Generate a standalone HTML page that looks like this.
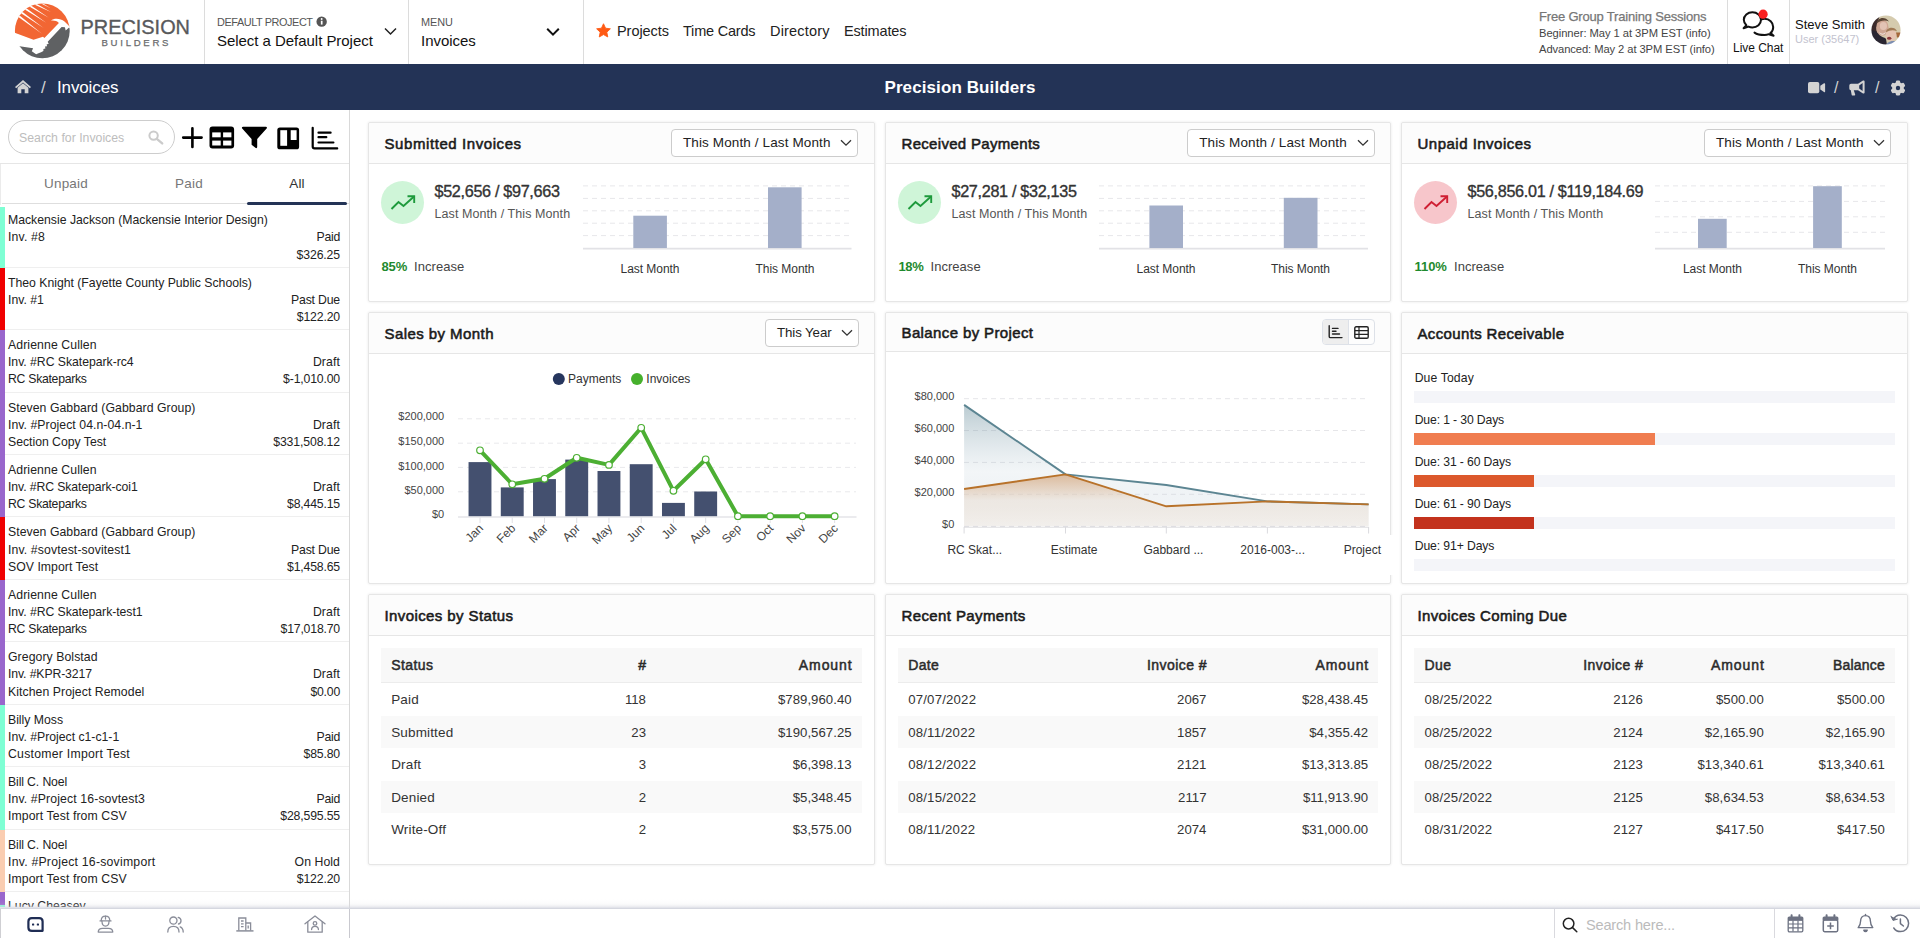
<!DOCTYPE html>
<html lang="en">
<head>
<meta charset="utf-8">
<title>Invoices - Precision Builders</title>
<style>
*{box-sizing:border-box;margin:0;padding:0}
html,body{width:1920px;height:938px;overflow:hidden;background:#fff}
body{font-family:"Liberation Sans",sans-serif;color:#222;font-size:13px;position:relative}
.abs{position:absolute}
svg{display:block;overflow:visible}
/* ---------- top header ---------- */
#top{position:absolute;left:0;top:0;width:1920px;height:64px;background:#fff}
.vdiv{position:absolute;top:0;width:1px;height:64px;background:#dcdcdc}
.lbl{position:absolute;font-size:10.9px;color:#555;letter-spacing:-.08px;white-space:nowrap;line-height:14px}
.val{position:absolute;font-size:15px;color:#111;letter-spacing:-.04px;white-space:nowrap;line-height:18px}
.nav{position:absolute;top:22px;font-size:14.5px;color:#222;letter-spacing:-.05px;white-space:nowrap;line-height:18px}
/* ---------- navy bar ---------- */
#bar{position:absolute;left:0;top:64px;width:1920px;height:46px;background:#233356;color:#fff}
/* ---------- sidebar ---------- */
#side{position:absolute;left:0;top:110px;width:350px;height:799px;border-right:1px solid #d9d9d9;background:#fff;overflow:hidden}
#side .clip{position:absolute;left:0;top:797px;width:349px;height:3px;background:#fff}
.tab{position:absolute;top:54px;height:40px;line-height:40px;text-align:center;font-size:13.5px;color:#777;letter-spacing:.2px}
.it{position:absolute;left:0;width:349px;height:62.43px;box-shadow:inset 0 -1px 0 #efefef;border-left:5px solid #9966cc;padding:7px 9px 3px 3px;font-size:12.25px;line-height:17.14px;color:#222;letter-spacing:0;white-space:nowrap}
.it div{display:flex;justify-content:space-between;height:17.14px}
.it.g{border-left-color:#7fffd4}
.it.r{border-left-color:#f00000}
.it.o{border-left-color:#facdb1}
/* ---------- footer ---------- */
#foot{position:absolute;left:0;top:909px;width:1920px;height:29px;background:#fff}
#fsh{position:absolute;left:0;top:899px;width:1920px;height:10px;background:linear-gradient(to bottom,rgba(213,215,224,0) 0%,rgba(213,215,224,.05) 30%,rgba(213,215,224,.1) 45%,rgba(213,215,224,.17) 55%,rgba(213,215,224,.29) 65%,rgba(213,215,224,.45) 75%,rgba(213,215,224,.69) 85%,rgba(213,215,224,1) 95%,rgba(213,215,224,1) 100%)}
/* ---------- cards ---------- */
.card{position:absolute;background:#fff;border:1px solid #e6e6e6;border-radius:2px;box-shadow:0 0 3px rgba(0,0,0,.09)}
.card .hd{position:absolute;left:0;top:0;width:100%;height:41px;background:#fcfcfc;border-bottom:1px solid #e6e6e6;border-radius:2px 2px 0 0}
.card .ttl{position:absolute;left:15.5px;top:11px;font-size:15px;font-weight:normal;-webkit-text-stroke:.55px #1a1a1a;color:#1a1a1a;white-space:nowrap;line-height:20px}
.sel{position:absolute;height:28px;border:1px solid #ccc;border-radius:4px;background:#fff;font-size:13.5px;color:#222;line-height:26px;padding-left:11px;letter-spacing:.15px;white-space:nowrap}
.sel svg{position:absolute;right:5px;top:9px}
.t{position:absolute;white-space:nowrap}
</style>
</head>
<body>

<!-- ================= TOP HEADER ================= -->
<div id="top">
  <!-- logo -->
  <svg class="abs" style="left:14px;top:3px" width="57" height="57" viewBox="0 0 57 57">
    <defs><clipPath id="lc"><circle cx="28.3" cy="27.9" r="27.4"/></clipPath></defs>
    <g clip-path="url(#lc)">
      <path d="M-3 28.300 L19.500 36.800 L29 33.700 L30.400 35 L44.900 19.900 C43 18 40 17.200 37 17.600 C40 14.900 46.500 15.200 50.500 18.600 C52.800 20.600 54.500 22.600 56.500 24.600 L60 24 L60 -5 L-5 -5 Z" fill="#f26633"/>
      <path d="M60 24.400 L54.800 24.800 L51.700 27.600 L50.900 24.300 L47.600 24.100 L33.700 38.650 L34.700 41 L32.700 41.300 L33 43.300 L31 43.600 L31.400 45.600 L29.400 45.900 L29.400 47.900 L27.100 49.200 L25.100 49.900 L22.100 51.200 L17.800 48.200 L19.100 45.300 L5.600 43.300 L-3 42.600 L-3 60 L60 60 Z" fill="#5f6163"/>
      <g fill="#fff">
        <path d="M4 13.800 L5.600 12.600 L27.600 30.600 Z"/>
        <path d="M6.300 9.800 L7.900 8.600 L29.600 25 Z"/>
        <path d="M10.400 6.200 L12 5 L32.200 19.700 Z"/>
        <path d="M14.800 3.300 L16.600 2.300 L34.800 14.700 Z"/>
        <path d="M20.200 1.400 L22 .6 L36.800 9.100 Z"/>
        <path d="M27 .6 L28.600 .2 L36.600 5.200 Z"/>
      </g>
    </g>
  </svg>
  <svg class="abs" style="left:80px;top:14px" width="112" height="36" viewBox="0 0 112 36">
    <text x="0.5" y="19.8" font-family="Liberation Sans, sans-serif" font-size="21" fill="#58595b" stroke="#58595b" stroke-width=".35" textLength="109.5" lengthAdjust="spacingAndGlyphs">PRECISION</text>
    <text x="21.5" y="31.8" font-family="Liberation Sans, sans-serif" font-size="9.6" fill="#6a6b6d" stroke="#6a6b6d" stroke-width=".25" textLength="67" lengthAdjust="spacing">BUILDERS</text>
  </svg>

  <div class="vdiv" style="left:204px"></div>
  <div class="lbl" style="left:217px;top:15px;letter-spacing:-.42px">DEFAULT PROJECT</div>
  <svg class="abs" style="left:315.5px;top:16.3px" width="11.300" height="11.300" viewBox="0 0 10 10"><circle cx="5" cy="5" r="4.6" fill="#555"/><rect x="4.3" y="4.2" width="1.5" height="3.4" fill="#fff"/><circle cx="5" cy="2.7" r=".85" fill="#fff"/></svg>
  <div class="val" style="left:217px;top:32px">Select a Default Project</div>
  <svg class="abs" style="left:384px;top:27px" width="13" height="9" viewBox="0 0 13 9"><path d="M1 1.5 L6.5 7 L12 1.5" fill="none" stroke="#222" stroke-width="1.5"/></svg>

  <div class="vdiv" style="left:408px"></div>
  <div class="lbl" style="left:421px;top:15px">MENU</div>
  <div class="val" style="left:421px;top:32px">Invoices</div>
  <svg class="abs" style="left:546px;top:27px" width="14" height="10" viewBox="0 0 14 10"><path d="M1.2 1.8 L7 7.6 L12.8 1.8" fill="none" stroke="#111" stroke-width="2"/></svg>

  <div class="vdiv" style="left:583px"></div>
  <svg class="abs" style="left:596px;top:23px" width="15" height="15" viewBox="0 0 24 24"><path d="M12 1.2 L15.3 8.3 L23 9.3 L17.3 14.6 L18.8 22.3 L12 18.5 L5.2 22.3 L6.7 14.6 L1 9.3 L8.7 8.3 Z" fill="#ff5a14" stroke="#ff5a14" stroke-width="1.4" stroke-linejoin="round"/></svg>
  <div class="nav" style="left:617px">Projects</div>
  <div class="nav" style="left:683px;letter-spacing:-.2px">Time Cards</div>
  <div class="nav" style="left:770px;letter-spacing:.19px">Directory</div>
  <div class="nav" style="left:844px;letter-spacing:-.15px">Estimates</div>

  <div class="t" style="left:1539px;top:9px;font-size:13px;color:#777;letter-spacing:-.19px;line-height:16px;-webkit-text-stroke:.25px #777">Free Group Training Sessions</div>
  <div class="t" style="left:1539px;top:26px;font-size:11.2px;color:#444;letter-spacing:-.05px;line-height:14px">Beginner: May 1 at 3PM EST (info)</div>
  <div class="t" style="left:1539px;top:42px;font-size:11.2px;color:#444;letter-spacing:-.08px;line-height:14px">Advanced: May 2 at 3PM EST (info)</div>

  <div class="vdiv" style="left:1727px"></div>
  <svg class="abs" style="left:1742px;top:9px" width="34" height="28" viewBox="0 0 34 28">
    <path d="M28.600 24 C30.300 22.500 31.200 20.300 31.200 17.900 C31.200 13.400 27.400 9.800 22.600 9.800 C21.500 9.800 20.500 10 19.600 10.300" fill="none" stroke="#111" stroke-width="2" stroke-linecap="round"/>
    <path d="M12.500 23.600 C14.600 25.100 17.800 26 22.600 26 C24.200 26 25.600 25.700 26.800 25.200 L31.600 26.700 L28.600 24" fill="none" stroke="#111" stroke-width="2" stroke-linecap="round" stroke-linejoin="round"/>
    <path d="M4.400 16.200 C2.800 14.800 1.800 12.900 1.800 10.800 C1.800 6.600 5.600 3.200 10.400 3.200 C15.200 3.200 19 6.600 19 10.800 C19 15 15.200 18.400 10.400 18.400 C9 18.400 7.700 18.100 6.500 17.600 L1.600 19.200 Z" fill="#fff" stroke="#111" stroke-width="2" stroke-linejoin="round"/>
    <circle cx="21.100" cy="5.200" r="4.600" fill="#fb1f1f"/>
  </svg>
  <div class="t" style="left:1733px;top:40px;font-size:12px;color:#111;letter-spacing:-.04px;line-height:16px">Live Chat</div>
  <div class="vdiv" style="left:1789px"></div>
  <div class="t" style="left:1795px;top:16.8px;font-size:13px;color:#111;letter-spacing:0;line-height:16px">Steve Smith</div>
  <div class="t" style="left:1795px;top:32px;font-size:11px;color:#c3c3cf;letter-spacing:0;line-height:14px">User (35647)</div>
  <!-- avatar -->
  <svg class="abs" style="left:1870.5px;top:14.5px" width="30" height="30" viewBox="0 0 30 30">
    <defs><clipPath id="av"><circle cx="15" cy="15" r="14.600"/></clipPath><filter id="avb" x="-10%" y="-10%" width="120%" height="120%"><feGaussianBlur stdDeviation=".75"/></filter></defs>
    <g clip-path="url(#av)"><g filter="url(#avb)">
      <rect x="-3" y="-3" width="36" height="36" fill="#d5cbae"/>
      <path d="M-3 -3 H10 L7 6 L5.500 14 L9 33 H-3 Z" fill="#3b2b2b"/>
      <path d="M25 17.500 H33 V22.500 H26 Z" fill="#a5673a"/>
      <ellipse cx="11.400" cy="12.600" rx="6.200" ry="8.200" fill="#cfa794"/>
      <ellipse cx="12.400" cy="11" rx="3.600" ry="4" fill="#e2c3b4"/>
      <path d="M5.500 8.500 C6 2.500 14 0.500 18 6.500 C14 4.800 9.500 5.300 5.500 8.500Z" fill="#5a4535"/>
      <path d="M-3 16 C3 13.500 6.500 17.500 9 20.500 C12 23 14 22 15 24 L16.500 33 L-3 33 Z" fill="#2b2530"/>
      <path d="M8 17 C10.500 19.200 13 19.200 15 16.800 C13.800 20.600 9.500 20.800 8 17Z" fill="#f0e4de"/>
      <ellipse cx="20" cy="20" rx="5.300" ry="6" fill="#e6c4b2"/>
      <path d="M15 17.300 C15.500 11.800 24 11 26 16.200 C22.500 14.500 18.500 15 15 17.300Z" fill="#a07a55"/>
      <path d="M13.500 33 C14.500 26.500 24 24 26 28 L27 33Z" fill="#7b8db0"/>
      <ellipse cx="18.200" cy="23.300" rx="2.200" ry="1.500" fill="#8b3a3a"/>
    </g></g>
  </svg>
</div>

<!-- ================= NAVY BAR ================= -->
<div id="bar">
  <svg class="abs" style="left:14px;top:15px" width="18" height="15" viewBox="0 0 18 15"><path d="M9 1 L1 8 L2.2 9.300 L9 3.400 L15.800 9.300 L17 8 Z" fill="#d3d3d3"/><path d="M3.600 8.800 L9 4.200 L14.400 8.800 L14.400 14.300 L10.700 14.300 L10.700 10.300 L7.300 10.300 L7.300 14.300 L3.600 14.300 Z" fill="#d3d3d3"/></svg>
  <div class="t" style="left:41px;top:14px;font-size:17px;color:#d3d3d3;line-height:20px">/</div>
  <div class="t" style="left:57px;top:14px;font-size:17px;color:#fff;letter-spacing:-.13px;line-height:20px">Invoices</div>
  <div class="t" style="left:760px;width:400px;text-align:center;top:14px;font-size:17px;font-weight:bold;color:#fff;letter-spacing:.1px;line-height:20px">Precision Builders</div>
  <!-- right icons -->
  <svg class="abs" style="left:1808px;top:18px" width="18" height="12" viewBox="0 0 18 12"><rect x="0" y="0" width="11.300" height="11.300" rx="1.800" fill="#d3d3d3"/><path d="M12.300 3.800 L16 1.300 Q17.100 .8 17.100 2 L17.100 9.400 Q17.100 10.600 16 10.100 L12.300 7.600 Z" fill="#d3d3d3"/></svg>
  <div class="t" style="left:1834px;top:14px;font-size:16px;color:#d3d3d3;line-height:20px">/</div>
  <svg class="abs" style="left:1849px;top:16px" width="17" height="16" viewBox="0 0 17 16"><path d="M14 0.600 Q15.600 0.200 15.600 1.600 L15.600 12.400 Q15.600 13.800 14 13.400 L9 10.200 L4.800 10.200 L6.200 14.600 Q6.400 15.600 5.400 15.600 L3.600 15.600 Q2.900 15.600 2.700 14.900 L1.800 10.200 Q0.300 10 0.300 8.500 L0.300 5.500 Q0.300 3.800 2 3.800 L9 3.800 Z M13.600 3 L10.200 5.400 L10.200 8.600 L13.600 11 Z" fill="#d3d3d3" fill-rule="evenodd"/></svg>
  <div class="t" style="left:1875px;top:14px;font-size:16px;color:#d3d3d3;line-height:20px">/</div>
  <svg class="abs" style="left:1890px;top:16px" width="16" height="16" viewBox="0 0 16 16"><g fill="#d3d3d3"><circle cx="8" cy="8" r="5.900"/><rect x="5.900" y="0.500" width="4.200" height="15" rx="1.300"/><rect x="5.900" y="0.500" width="4.200" height="15" rx="1.300" transform="rotate(60 8 8)"/><rect x="5.900" y="0.500" width="4.200" height="15" rx="1.300" transform="rotate(120 8 8)"/></g><circle cx="8" cy="8" r="2.200" fill="#233356"/></svg>
</div>

<!-- ================= SIDEBAR ================= -->
<div id="side">
  <div class="abs" style="left:8px;top:10px;width:167px;height:33.5px;border:1px solid #cdcdcd;border-radius:17px"></div>
  <div class="t" style="left:19px;top:19.8px;font-size:12.3px;color:#bdbdbd;letter-spacing:0;line-height:16px">Search for Invoices</div>
  <svg class="abs" style="left:147.5px;top:19.5px" width="16" height="15" viewBox="0 0 16 15"><circle cx="5.600" cy="5.600" r="4.200" fill="none" stroke="#cbcbcb" stroke-width="2"/><path d="M8.800 8.800 L14.200 13.400" stroke="#cbcbcb" stroke-width="2.400" stroke-linecap="round"/></svg>
  <svg class="abs" style="left:182px;top:17px" width="21" height="21" viewBox="0 0 21 21"><path d="M10.400 1.300 V19.900 M1.200 10.600 H19.600" stroke="#000" stroke-width="2.600" stroke-linecap="round"/></svg>
  <svg class="abs" style="left:209px;top:16px" width="26" height="23" viewBox="0 0 26 23"><rect x=".5" y=".6" width="24.600" height="21.900" rx="3" fill="#000"/><rect x="3.200" y="6.400" width="8.500" height="4.900" fill="#fff"/><rect x="14.100" y="6.400" width="8.300" height="4.900" fill="#fff"/><rect x="3.200" y="14.600" width="8.500" height="4.900" fill="#fff"/><rect x="14.100" y="14.600" width="8.300" height="4.900" fill="#fff"/></svg>
  <svg class="abs" style="left:241px;top:16px" width="27" height="23" viewBox="0 0 27 23"><path d="M2.200 .8 H24.800 Q26.600 1 25.600 2.600 L16.200 13 V21 Q16 22.800 14.400 21.800 L10.600 18.800 V13 L1.200 2.600 Q.2 1 2.200 .8Z" fill="#000"/></svg>
  <svg class="abs" style="left:277px;top:16.500px" width="23" height="23" viewBox="0 0 23 23"><rect x=".3" y=".5" width="21.800" height="21.800" rx="2.600" fill="#000"/><rect x="3.300" y="3.200" width="6.800" height="15.600" fill="#fff"/><rect x="13.700" y="3.200" width="5.900" height="9.800" fill="#fff"/></svg>
  <svg class="abs" style="left:311px;top:16.500px" width="28" height="23" viewBox="0 0 28 23"><path d="M1.700 .8 V19.600 Q1.700 21.400 3.500 21.400 H26.200" fill="none" stroke="#000" stroke-width="2.200" stroke-linecap="round"/><path d="M7.500 5.700 H19.600 M7.500 10.200 H15.300 M7.500 15.500 H22.400" stroke="#000" stroke-width="2.200" stroke-linecap="round"/></svg>
  <div class="abs" style="left:0;top:53px;width:349px;height:1px;background:#e6e6e6"></div>
  <div class="abs" style="left:2px;top:93px;width:347px;height:1px;background:#dedede"></div><div class="abs" style="left:0;top:54px;width:1px;height:41px;background:#ebebeb"></div>
  <div class="tab" style="left:8px;width:116px">Unpaid</div>
  <div class="tab" style="left:131px;width:116px">Paid</div>
  <div class="tab" style="left:247px;width:100px;color:#333">All</div>
  <div class="abs" style="left:247px;top:92px;width:100px;height:3px;background:#233356;border-radius:1.5px"></div>
  <div class="it g" style="top:95.25px"><div><span style="letter-spacing:-0.006px">Mackensie Jackson (Mackensie Interior Design)</span><span></span></div><div><span style="letter-spacing:0.175px">Inv. #8</span><span style="letter-spacing:-0.258px">Paid</span></div><div><span></span><span style="letter-spacing:-0.126px">$326.25</span></div></div>
  <div class="it r" style="top:157.68px"><div><span style="letter-spacing:-0.013px">Theo Knight (Fayette County Public Schools)</span><span></span></div><div><span style="letter-spacing:0.004px">Inv. #1</span><span style="letter-spacing:-0.174px">Past Due</span></div><div><span></span><span style="letter-spacing:-0.154px">$122.20</span></div></div>
  <div class="it" style="top:220.11px"><div><span style="letter-spacing:0.095px">Adrienne Cullen</span><span></span></div><div><span style="letter-spacing:-0.037px">Inv. #RC Skatepark-rc4</span><span style="letter-spacing:0.111px">Draft</span></div><div><span style="letter-spacing:-0.284px">RC Skateparks</span><span style="letter-spacing:-0.168px">$-1,010.00</span></div></div>
  <div class="it" style="top:282.54px"><div><span style="letter-spacing:0.05px">Steven Gabbard (Gabbard Group)</span><span></span></div><div><span style="letter-spacing:0.05px">Inv. #Project 04.n-04.n-1</span><span style="letter-spacing:0.111px">Draft</span></div><div><span style="letter-spacing:-0.019px">Section Copy Test</span><span style="letter-spacing:-0.12px">$331,508.12</span></div></div>
  <div class="it" style="top:344.97px"><div><span style="letter-spacing:0.095px">Adrienne Cullen</span><span></span></div><div><span style="letter-spacing:-0.098px">Inv. #RC Skatepark-coi1</span><span style="letter-spacing:0.111px">Draft</span></div><div><span style="letter-spacing:-0.284px">RC Skateparks</span><span style="letter-spacing:-0.178px">$8,445.15</span></div></div>
  <div class="it r" style="top:407.40px"><div><span style="letter-spacing:0.05px">Steven Gabbard (Gabbard Group)</span><span></span></div><div><span style="letter-spacing:0.118px">Inv. #sovtest-sovitest1</span><span style="letter-spacing:-0.174px">Past Due</span></div><div><span style="letter-spacing:0.037px">SOV Import Test</span><span style="letter-spacing:-0.178px">$1,458.65</span></div></div>
  <div class="it" style="top:469.83px"><div><span style="letter-spacing:0.095px">Adrienne Cullen</span><span></span></div><div><span style="letter-spacing:-0.061px">Inv. #RC Skatepark-test1</span><span style="letter-spacing:0.111px">Draft</span></div><div><span style="letter-spacing:-0.284px">RC Skateparks</span><span style="letter-spacing:-0.181px">$17,018.70</span></div></div>
  <div class="it" style="top:532.26px"><div><span style="letter-spacing:0.072px">Gregory Bolstad</span><span></span></div><div><span style="letter-spacing:-0.12px">Inv. #KPR-3217</span><span style="letter-spacing:0.111px">Draft</span></div><div><span style="letter-spacing:0.064px">Kitchen Project Remodel</span><span style="letter-spacing:-0.211px">$0.00</span></div></div>
  <div class="it g" style="top:594.69px"><div><span style="letter-spacing:-0.014px">Billy Moss</span><span></span></div><div><span style="letter-spacing:-0.011px">Inv. #Project c1-c1-1</span><span style="letter-spacing:-0.258px">Paid</span></div><div><span style="letter-spacing:0.256px">Customer Import Test</span><span style="letter-spacing:-0.161px">$85.80</span></div></div>
  <div class="it g" style="top:657.12px"><div><span style="letter-spacing:-0.124px">Bill C. Noel</span><span></span></div><div><span style="letter-spacing:0.123px">Inv. #Project 16-sovtest3</span><span style="letter-spacing:-0.258px">Paid</span></div><div><span style="letter-spacing:0.096px">Import Test from CSV</span><span style="letter-spacing:-0.161px">$28,595.55</span></div></div>
  <div class="it o" style="top:719.55px"><div><span style="letter-spacing:-0.124px">Bill C. Noel</span><span></span></div><div><span style="letter-spacing:0.231px">Inv. #Project 16-sovimport</span><span style="letter-spacing:0.064px">On Hold</span></div><div><span style="letter-spacing:0.096px">Import Test from CSV</span><span style="letter-spacing:-0.154px">$122.20</span></div></div>
  <div class="it" style="top:781.98px;padding-top:5.6px"><div><span style="letter-spacing:0px">Lucy Cheasey</span><span></span></div><div><span style="letter-spacing:0px">Inv. #2101</span><span style="letter-spacing:0.111px">Draft</span></div><div><span style="letter-spacing:0px">Cheasey Kitchen</span><span style="letter-spacing:-0.211px">$0.00</span></div></div>
  <div class="abs" style="left:0;top:95px;width:6px;height:2px;background:#fff"></div>
  <div class="clip"></div>
  <div class="abs" style="left:0;top:795px;width:5px;height:2px;background:#7fffd4"></div>
</div>

<!-- MAIN_START -->
<!-- ================= MAIN ================= -->
<div id="main">
<div class="card" style="left:368px;top:122px;width:507px;height:179.5px"><div class="hd" style="height:41px"></div><div class="ttl" style="letter-spacing:0.58px;top:10.5px">Submitted Invoices</div></div>
<div class="sel" style="left:671.0px;top:129px;width:187.4px;font-size:13.5px;letter-spacing:0.12px">This Month / Last Month<svg width="12" height="8" viewBox="0 0 12 8"><path d="M1 1.2 L6 6.2 L11 1.200" fill="none" stroke="#333" stroke-width="1.300"/></svg></div>
<svg class="abs" style="left:381.0px;top:180.7px" width="43" height="43" viewBox="0 0 43 43"><circle cx="21.5" cy="21.5" r="21.5" fill="#cff5d8"/><path d="M10.5 28 L17.500 21 L22.500 25 L33 15.500" fill="none" stroke="#1e9a3c" stroke-width="1.900" stroke-linejoin="miter"/><path d="M26.500 15.300 H33.200 V22" fill="none" stroke="#1e9a3c" stroke-width="1.900"/></svg>
<div class="t" style="left:434.5px;top:180.8px;font-size:16.2px;color:#333;letter-spacing:-0.32px;font-weight:normal;line-height:20px;-webkit-text-stroke:.35px #333;">$52,656 / $97,663</div>
<div class="t" style="left:434.5px;top:203.6px;font-size:12.5px;color:#555;letter-spacing:0.08px;font-weight:normal;line-height:20px;">Last Month / This Month</div>
<div class="t" style="left:381.4px;top:257.2px;font-size:13px;color:#1f8a2e;letter-spacing:-0.1px;font-weight:bold;line-height:20px;">85%</div>
<div class="t" style="left:414.09999999999997px;top:257.2px;font-size:13px;color:#444;letter-spacing:0.04px;font-weight:normal;line-height:20px;">Increase</div>
<svg class="abs" style="left:0;top:0" width="1920" height="938" viewBox="0 0 1920 938"><path d="M583 185.9 H851.5" stroke="#e7e7ea" stroke-width="1" stroke-dasharray="5 4"/><path d="M583 198.4 H851.5" stroke="#e7e7ea" stroke-width="1" stroke-dasharray="5 4"/><path d="M583 210.8 H851.5" stroke="#e7e7ea" stroke-width="1" stroke-dasharray="5 4"/><path d="M583 223.2 H851.5" stroke="#e7e7ea" stroke-width="1" stroke-dasharray="5 4"/><path d="M583 235.6 H851.5" stroke="#e7e7ea" stroke-width="1" stroke-dasharray="5 4"/><path d="M583 248.600 H851.5" stroke="#e2e2e6" stroke-width="1.600"/><rect x="633.3" y="215.7" width="33.6" height="32.3" fill="#a4afc9"/><rect x="768" y="187.3" width="33.6" height="60.7" fill="#a4afc9"/></svg>
<div class="t" style="left:500px;width:300px;text-align:center;top:258.8px;font-size:12px;color:#333;letter-spacing:-0.05px;font-weight:normal;line-height:20px;">Last Month</div>
<div class="t" style="left:635px;width:300px;text-align:center;top:258.8px;font-size:12px;color:#333;letter-spacing:-0.05px;font-weight:normal;line-height:20px;">This Month</div>
<div class="card" style="left:885px;top:122px;width:506px;height:179.5px"><div class="hd" style="height:41px"></div><div class="ttl" style="letter-spacing:0.31px;top:10.5px">Received Payments</div></div>
<div class="sel" style="left:1187.1999999999998px;top:129px;width:187.4px;font-size:13.5px;letter-spacing:0.12px">This Month / Last Month<svg width="12" height="8" viewBox="0 0 12 8"><path d="M1 1.2 L6 6.2 L11 1.200" fill="none" stroke="#333" stroke-width="1.300"/></svg></div>
<svg class="abs" style="left:898.0px;top:180.7px" width="43" height="43" viewBox="0 0 43 43"><circle cx="21.5" cy="21.5" r="21.5" fill="#cff5d8"/><path d="M10.5 28 L17.500 21 L22.500 25 L33 15.500" fill="none" stroke="#1e9a3c" stroke-width="1.900" stroke-linejoin="miter"/><path d="M26.500 15.300 H33.200 V22" fill="none" stroke="#1e9a3c" stroke-width="1.900"/></svg>
<div class="t" style="left:951.5px;top:180.8px;font-size:16.2px;color:#333;letter-spacing:-0.32px;font-weight:normal;line-height:20px;-webkit-text-stroke:.35px #333;">$27,281 / $32,135</div>
<div class="t" style="left:951.5px;top:203.6px;font-size:12.5px;color:#555;letter-spacing:0.08px;font-weight:normal;line-height:20px;">Last Month / This Month</div>
<div class="t" style="left:898.4px;top:257.2px;font-size:13px;color:#1f8a2e;letter-spacing:-0.3px;font-weight:bold;line-height:20px;">18%</div>
<div class="t" style="left:930.5px;top:257.2px;font-size:13px;color:#444;letter-spacing:0.04px;font-weight:normal;line-height:20px;">Increase</div>
<svg class="abs" style="left:0;top:0" width="1920" height="938" viewBox="0 0 1920 938"><path d="M1099 185.9 H1368" stroke="#e7e7ea" stroke-width="1" stroke-dasharray="5 4"/><path d="M1099 198.4 H1368" stroke="#e7e7ea" stroke-width="1" stroke-dasharray="5 4"/><path d="M1099 210.8 H1368" stroke="#e7e7ea" stroke-width="1" stroke-dasharray="5 4"/><path d="M1099 223.2 H1368" stroke="#e7e7ea" stroke-width="1" stroke-dasharray="5 4"/><path d="M1099 235.6 H1368" stroke="#e7e7ea" stroke-width="1" stroke-dasharray="5 4"/><path d="M1099 248.600 H1368" stroke="#e2e2e6" stroke-width="1.600"/><rect x="1149.4" y="205.5" width="33.6" height="42.5" fill="#a4afc9"/><rect x="1283.8" y="197.8" width="33.7" height="50.2" fill="#a4afc9"/></svg>
<div class="t" style="left:1016px;width:300px;text-align:center;top:258.8px;font-size:12px;color:#333;letter-spacing:-0.05px;font-weight:normal;line-height:20px;">Last Month</div>
<div class="t" style="left:1150.5px;width:300px;text-align:center;top:258.8px;font-size:12px;color:#333;letter-spacing:-0.05px;font-weight:normal;line-height:20px;">This Month</div>
<div class="card" style="left:1401px;top:122px;width:507px;height:179.5px"><div class="hd" style="height:41px"></div><div class="ttl" style="letter-spacing:0.49px;top:10.5px">Unpaid Invoices</div></div>
<div class="sel" style="left:1704.0px;top:129px;width:187.4px;font-size:13.5px;letter-spacing:0.12px">This Month / Last Month<svg width="12" height="8" viewBox="0 0 12 8"><path d="M1 1.2 L6 6.2 L11 1.200" fill="none" stroke="#333" stroke-width="1.300"/></svg></div>
<svg class="abs" style="left:1414.0px;top:180.7px" width="43" height="43" viewBox="0 0 43 43"><circle cx="21.5" cy="21.5" r="21.5" fill="#f7c6cb"/><path d="M10.5 28 L17.500 21 L22.500 25 L33 15.500" fill="none" stroke="#cf1f33" stroke-width="1.900" stroke-linejoin="miter"/><path d="M26.500 15.300 H33.200 V22" fill="none" stroke="#cf1f33" stroke-width="1.900"/></svg>
<div class="t" style="left:1467.5px;top:180.8px;font-size:16.2px;color:#333;letter-spacing:-0.32px;font-weight:normal;line-height:20px;-webkit-text-stroke:.35px #333;">$56,856.01 / $119,184.69</div>
<div class="t" style="left:1467.5px;top:203.6px;font-size:12.5px;color:#555;letter-spacing:0.08px;font-weight:normal;line-height:20px;">Last Month / This Month</div>
<div class="t" style="left:1414.4px;top:257.2px;font-size:13px;color:#1f8a2e;letter-spacing:0px;font-weight:bold;line-height:20px;">110%</div>
<div class="t" style="left:1454.0px;top:257.2px;font-size:13px;color:#444;letter-spacing:0.04px;font-weight:normal;line-height:20px;">Increase</div>
<svg class="abs" style="left:0;top:0" width="1920" height="938" viewBox="0 0 1920 938"><path d="M1655 185.9 H1885" stroke="#e7e7ea" stroke-width="1" stroke-dasharray="5 4"/><path d="M1655 201.4 H1885" stroke="#e7e7ea" stroke-width="1" stroke-dasharray="5 4"/><path d="M1655 216.8 H1885" stroke="#e7e7ea" stroke-width="1" stroke-dasharray="5 4"/><path d="M1655 232.3 H1885" stroke="#e7e7ea" stroke-width="1" stroke-dasharray="5 4"/><path d="M1655 248.600 H1885" stroke="#e2e2e6" stroke-width="1.600"/><rect x="1698" y="218.8" width="28.7" height="29.2" fill="#a4afc9"/><rect x="1813.1" y="186.2" width="28.7" height="61.8" fill="#a4afc9"/></svg>
<div class="t" style="left:1562.4px;width:300px;text-align:center;top:258.8px;font-size:12px;color:#333;letter-spacing:-0.05px;font-weight:normal;line-height:20px;">Last Month</div>
<div class="t" style="left:1677.5px;width:300px;text-align:center;top:258.8px;font-size:12px;color:#333;letter-spacing:-0.05px;font-weight:normal;line-height:20px;">This Month</div>
<div class="card" style="left:368px;top:312px;width:507px;height:271.5px"><div class="hd" style="height:41px"></div><div class="ttl" style="letter-spacing:0.43px;top:10.5px">Sales by Month</div></div>
<div class="sel" style="left:765px;top:319px;width:94px;font-size:13.3px;letter-spacing:-0.1px">This Year<svg width="12" height="8" viewBox="0 0 12 8"><path d="M1 1.2 L6 6.2 L11 1.200" fill="none" stroke="#333" stroke-width="1.300"/></svg></div>
<svg class="abs" style="left:0;top:0" width="1920" height="938" viewBox="0 0 1920 938" font-family="Liberation Sans, sans-serif"><circle cx="558.800" cy="379" r="6" fill="#26365e"/><text x="568" y="383.200" font-size="12" fill="#333">Payments</text><circle cx="637" cy="379" r="6" fill="#46b02c"/><text x="646.300" y="383.200" font-size="12" fill="#333">Invoices</text><path d="M458 418.8 H856" stroke="#e9e9ec" stroke-width="1" stroke-dasharray="5 4"/><path d="M458 443.2 H856" stroke="#e9e9ec" stroke-width="1" stroke-dasharray="5 4"/><path d="M458 467.4 H856" stroke="#e9e9ec" stroke-width="1" stroke-dasharray="5 4"/><path d="M458 491.8 H856" stroke="#e9e9ec" stroke-width="1" stroke-dasharray="5 4"/><path d="M458 516.900 H856.500" stroke="#e4e4e8" stroke-width="1.500"/><text x="444.200" y="420.3" font-size="11" fill="#444" text-anchor="end">$200,000</text><text x="444.200" y="445.3" font-size="11" fill="#444" text-anchor="end">$150,000</text><text x="444.200" y="469.5" font-size="11" fill="#444" text-anchor="end">$100,000</text><text x="444.200" y="493.7" font-size="11" fill="#444" text-anchor="end">$50,000</text><text x="444.200" y="518.2" font-size="11" fill="#444" text-anchor="end">$0</text><rect x="468.55" y="462.1" width="22.900" height="54.1" fill="#44506f"/><rect x="500.79" y="487.4" width="22.900" height="28.8" fill="#44506f"/><rect x="533.03" y="479.1" width="22.900" height="37.1" fill="#44506f"/><rect x="565.27" y="459.6" width="22.900" height="56.6" fill="#44506f"/><rect x="597.51" y="471" width="22.900" height="45.2" fill="#44506f"/><rect x="629.75" y="464.2" width="22.900" height="52.0" fill="#44506f"/><rect x="661.99" y="502.9" width="22.900" height="13.3" fill="#44506f"/><rect x="694.23" y="491.5" width="22.900" height="24.7" fill="#44506f"/><path d="M480.00 517.500 V523" stroke="#e0e0e4" stroke-width="1"/><text x="484.00" y="529" font-size="12" fill="#444" text-anchor="end" transform="rotate(-45 484.00 529)">Jan</text><path d="M512.24 517.500 V523" stroke="#e0e0e4" stroke-width="1"/><text x="516.24" y="529" font-size="12" fill="#444" text-anchor="end" transform="rotate(-45 516.24 529)">Feb</text><path d="M544.48 517.500 V523" stroke="#e0e0e4" stroke-width="1"/><text x="548.48" y="529" font-size="12" fill="#444" text-anchor="end" transform="rotate(-45 548.48 529)">Mar</text><path d="M576.72 517.500 V523" stroke="#e0e0e4" stroke-width="1"/><text x="580.72" y="529" font-size="12" fill="#444" text-anchor="end" transform="rotate(-45 580.72 529)">Apr</text><path d="M608.96 517.500 V523" stroke="#e0e0e4" stroke-width="1"/><text x="612.96" y="529" font-size="12" fill="#444" text-anchor="end" transform="rotate(-45 612.96 529)">May</text><path d="M641.20 517.500 V523" stroke="#e0e0e4" stroke-width="1"/><text x="645.20" y="529" font-size="12" fill="#444" text-anchor="end" transform="rotate(-45 645.20 529)">Jun</text><path d="M673.44 517.500 V523" stroke="#e0e0e4" stroke-width="1"/><text x="677.44" y="529" font-size="12" fill="#444" text-anchor="end" transform="rotate(-45 677.44 529)">Jul</text><path d="M705.68 517.500 V523" stroke="#e0e0e4" stroke-width="1"/><text x="709.68" y="529" font-size="12" fill="#444" text-anchor="end" transform="rotate(-45 709.68 529)">Aug</text><path d="M737.92 517.500 V523" stroke="#e0e0e4" stroke-width="1"/><text x="741.92" y="529" font-size="12" fill="#444" text-anchor="end" transform="rotate(-45 741.92 529)">Sep</text><path d="M770.16 517.500 V523" stroke="#e0e0e4" stroke-width="1"/><text x="774.16" y="529" font-size="12" fill="#444" text-anchor="end" transform="rotate(-45 774.16 529)">Oct</text><path d="M802.40 517.500 V523" stroke="#e0e0e4" stroke-width="1"/><text x="806.40" y="529" font-size="12" fill="#444" text-anchor="end" transform="rotate(-45 806.40 529)">Nov</text><path d="M834.64 517.500 V523" stroke="#e0e0e4" stroke-width="1"/><text x="838.64" y="529" font-size="12" fill="#444" text-anchor="end" transform="rotate(-45 838.64 529)">Dec</text><polyline points="480.00,450.3 512.24,484.3 544.48,478.8 576.72,457.8 608.96,464.9 641.20,427.8 673.44,490.8 705.68,459.3 737.92,516.2 770.16,516.2 802.40,516.2 834.64,516.2" fill="none" stroke="#4caf33" stroke-width="4" stroke-linejoin="round" stroke-linecap="round"/><circle cx="480.00" cy="450.3" r="3.300" fill="#fff" stroke="#4caf33" stroke-width="1.200"/><circle cx="512.24" cy="484.3" r="3.300" fill="#fff" stroke="#4caf33" stroke-width="1.200"/><circle cx="544.48" cy="478.8" r="3.300" fill="#fff" stroke="#4caf33" stroke-width="1.200"/><circle cx="576.72" cy="457.8" r="3.300" fill="#fff" stroke="#4caf33" stroke-width="1.200"/><circle cx="608.96" cy="464.9" r="3.300" fill="#fff" stroke="#4caf33" stroke-width="1.200"/><circle cx="641.20" cy="427.8" r="3.300" fill="#fff" stroke="#4caf33" stroke-width="1.200"/><circle cx="673.44" cy="490.8" r="3.300" fill="#fff" stroke="#4caf33" stroke-width="1.200"/><circle cx="705.68" cy="459.3" r="3.300" fill="#fff" stroke="#4caf33" stroke-width="1.200"/><circle cx="737.92" cy="516.2" r="3.300" fill="#fff" stroke="#4caf33" stroke-width="1.200"/><circle cx="770.16" cy="516.2" r="3.300" fill="#fff" stroke="#4caf33" stroke-width="1.200"/><circle cx="802.40" cy="516.2" r="3.300" fill="#fff" stroke="#4caf33" stroke-width="1.200"/><circle cx="834.64" cy="516.2" r="3.300" fill="#fff" stroke="#4caf33" stroke-width="1.200"/></svg>
<div class="card" style="left:885px;top:312px;width:506px;height:271.5px"><div class="hd" style="height:39px"></div><div class="ttl" style="letter-spacing:0.38px;top:9.5px">Balance by Project</div></div>
<div class="abs" style="left:1322px;top:319px;width:53px;height:26px;border:1px solid #dde1e8;border-radius:4px;background:#fdfdfd;overflow:hidden"><div style="position:absolute;left:0;top:0;width:26px;height:24px;background:#eeeeee;border-right:1px solid #dde1e8"></div></div>
<svg class="abs" style="left:1328px;top:325px" width="15" height="14" viewBox="0 0 15 14"><path d="M1.200 .8 V11.400 Q1.200 12.600 2.400 12.600 H14" fill="none" stroke="#222" stroke-width="1.400" stroke-linecap="round"/><path d="M4.500 3.400 H10 M4.500 6.200 H8 M4.500 9 H11.500" stroke="#222" stroke-width="1.400" stroke-linecap="round"/></svg>
<svg class="abs" style="left:1354px;top:325.500px" width="15" height="13" viewBox="0 0 15 13"><rect x=".8" y=".8" width="13.400" height="11.400" rx="1.300" fill="none" stroke="#222" stroke-width="1.400"/><path d="M1 4.700 H14 M1 8.300 H14 M5 1 V12" stroke="#222" stroke-width="1.200"/></svg>
<svg class="abs" style="left:0;top:0" width="1920" height="938" viewBox="0 0 1920 938" font-family="Liberation Sans, sans-serif"><defs><linearGradient id="gb" x1="0" y1="0" x2="0" y2="1"><stop offset="0" stop-color="#5b8391" stop-opacity=".42"/><stop offset=".55" stop-color="#9fb6c4" stop-opacity=".13"/><stop offset="1" stop-color="#dfe6ee" stop-opacity=".35"/></linearGradient><linearGradient id="go" x1="0" y1="0" x2="0" y2="1"><stop offset="0" stop-color="#c98a52" stop-opacity=".55"/><stop offset=".5" stop-color="#e9dccf" stop-opacity=".5"/><stop offset="1" stop-color="#f1ede8" stop-opacity=".75"/></linearGradient></defs><path d="M964 398.7 H1368.600" stroke="#e6e6e9" stroke-width="1" stroke-dasharray="5 4"/><path d="M964 430.5 H1368.600" stroke="#e6e6e9" stroke-width="1" stroke-dasharray="5 4"/><path d="M964 462.4 H1368.600" stroke="#e6e6e9" stroke-width="1" stroke-dasharray="5 4"/><path d="M964 494.3 H1368.600" stroke="#e6e6e9" stroke-width="1" stroke-dasharray="5 4"/><path d="M964.1 404.9 L1065.5 474.4 L1166.3 485 L1267.4 501.4 L1368.6 504.4 L1368.6 526.4 L964.1 526.4 Z" fill="url(#gb)"/><path d="M964.1 489 L1065.5 474.4 L1166.3 506.3 L1267.4 501.4 L1368.6 504.4 L1368.6 526.4 L964.1 526.4 Z" fill="url(#go)"/><path d="M964 526.400 H1368.600" stroke="#dcdcdf" stroke-width="1" stroke-dasharray="5 4"/><path d="M964 527.400 H1368.600" stroke="#e3e3e6" stroke-width="1"/><path d="M964.1 404.9 L1065.5 474.4 L1166.3 485 L1267.4 501.4 L1368.6 504.4" fill="none" stroke="#5c8592" stroke-width="1.900" stroke-linejoin="round"/><path d="M964.1 489 L1065.5 474.4 L1166.3 506.3 L1267.4 501.4 L1368.6 504.4" fill="none" stroke="#b8722a" stroke-width="1.900" stroke-linejoin="round"/><path d="M964.1 527 V533.500" stroke="#dadade" stroke-width="1"/><path d="M1065.5 527 V533.500" stroke="#dadade" stroke-width="1"/><path d="M1166.3 527 V533.500" stroke="#dadade" stroke-width="1"/><path d="M1267.4 527 V533.500" stroke="#dadade" stroke-width="1"/><path d="M1368.6 527 V533.500" stroke="#dadade" stroke-width="1"/><text x="954.300" y="400.2" font-size="11" fill="#444" text-anchor="end">$80,000</text><text x="954.300" y="432.4" font-size="11" fill="#444" text-anchor="end">$60,000</text><text x="954.300" y="464.2" font-size="11" fill="#444" text-anchor="end">$40,000</text><text x="954.300" y="496.4" font-size="11" fill="#444" text-anchor="end">$20,000</text><text x="954.300" y="528.2" font-size="11" fill="#444" text-anchor="end">$0</text><text x="974.8" y="554.200" font-size="12" fill="#333" text-anchor="middle">RC Skat...</text><text x="1074.2" y="554.200" font-size="12" fill="#333" text-anchor="middle">Estimate</text><text x="1173.4" y="554.200" font-size="12" fill="#333" text-anchor="middle">Gabbard ...</text><text x="1272.7" y="554.200" font-size="12" fill="#333" text-anchor="middle">2016-003-...</text><text x="1381" y="554.200" font-size="12" fill="#333" text-anchor="end">Project</text></svg>
<div class="abs" style="left:1384px;top:535px;width:9px;height:39.500px;background:#fff"></div>
<div class="card" style="left:1401px;top:312px;width:507px;height:271.5px"><div class="hd" style="height:41px"></div><div class="ttl" style="letter-spacing:0.36px;top:10.5px">Accounts Receivable</div></div>
<div class="t" style="left:1414.7px;top:368.0px;font-size:12.2px;color:#222;letter-spacing:0.13px;font-weight:normal;line-height:20px;">Due Today</div>
<div class="abs" style="left:1414px;top:391px;width:481px;height:11.800px;background:#f4f5f9"></div>
<div class="t" style="left:1414.7px;top:410.0px;font-size:12.2px;color:#222;letter-spacing:-0.13px;font-weight:normal;line-height:20px;">Due: 1 - 30 Days</div>
<div class="abs" style="left:1414px;top:433px;width:481px;height:11.800px;background:#f4f5f9"></div>
<div class="abs" style="left:1414px;top:433px;width:241px;height:11.800px;background:#f07d50"></div>
<div class="t" style="left:1414.7px;top:452.0px;font-size:12.2px;color:#222;letter-spacing:-0.12px;font-weight:normal;line-height:20px;">Due: 31 - 60 Days</div>
<div class="abs" style="left:1414px;top:475px;width:481px;height:11.800px;background:#f4f5f9"></div>
<div class="abs" style="left:1414px;top:475px;width:119.79999999999995px;height:11.800px;background:#dc582c"></div>
<div class="t" style="left:1414.7px;top:494.1px;font-size:12.2px;color:#222;letter-spacing:-0.12px;font-weight:normal;line-height:20px;">Due: 61 - 90 Days</div>
<div class="abs" style="left:1414px;top:517.1px;width:481px;height:11.800px;background:#f4f5f9"></div>
<div class="abs" style="left:1414px;top:517.1px;width:119.79999999999995px;height:11.800px;background:#c3321d"></div>
<div class="t" style="left:1414.7px;top:536.2px;font-size:12.2px;color:#222;letter-spacing:-0.1px;font-weight:normal;line-height:20px;">Due: 91+ Days</div>
<div class="abs" style="left:1414px;top:559.2px;width:481px;height:11.800px;background:#f4f5f9"></div>
<div class="card" style="left:368px;top:594px;width:507px;height:271px"><div class="hd" style="height:41px"></div><div class="ttl" style="letter-spacing:0.4px;top:10.5px">Invoices by Status</div></div>
<div class="abs" style="left:381px;top:648px;width:481px;height:34.500px;background:#f8f8f8;border-bottom:1.500px solid #ececec"></div>
<div class="abs" style="left:381px;top:716px;width:481px;height:32px;background:#f9f9f9"></div>
<div class="abs" style="left:381px;top:781px;width:481px;height:32px;background:#f9f9f9"></div>
<div class="t" style="left:391.2px;top:654.8px;font-size:14px;color:#2b2b2b;letter-spacing:0.4px;font-weight:normal;line-height:20px;-webkit-text-stroke:.5px #2b2b2b;">Status</div>
<div class="t" style="right:1274px;top:654.8px;font-size:14px;color:#2b2b2b;letter-spacing:0px;font-weight:normal;line-height:20px;-webkit-text-stroke:.5px #2b2b2b;">#</div>
<div class="t" style="right:1067.5px;top:654.8px;font-size:14px;color:#2b2b2b;letter-spacing:0.9px;font-weight:normal;line-height:20px;-webkit-text-stroke:.5px #2b2b2b;">Amount</div>
<div class="t" style="left:391.2px;top:689.5px;font-size:13.5px;color:#333;letter-spacing:0.15px;font-weight:normal;line-height:20px;">Paid</div>
<div class="t" style="right:1274px;top:689.5px;font-size:13.2px;color:#333;letter-spacing:0.03px;font-weight:normal;line-height:20px;">118</div>
<div class="t" style="right:1068.4px;top:689.5px;font-size:13.2px;color:#333;letter-spacing:0.03px;font-weight:normal;line-height:20px;">$789,960.40</div>
<div class="t" style="left:391.2px;top:722.7px;font-size:13.5px;color:#333;letter-spacing:0.15px;font-weight:normal;line-height:20px;">Submitted</div>
<div class="t" style="right:1274px;top:722.7px;font-size:13.2px;color:#333;letter-spacing:0.03px;font-weight:normal;line-height:20px;">23</div>
<div class="t" style="right:1068.4px;top:722.7px;font-size:13.2px;color:#333;letter-spacing:0.03px;font-weight:normal;line-height:20px;">$190,567.25</div>
<div class="t" style="left:391.2px;top:754.7px;font-size:13.5px;color:#333;letter-spacing:0.15px;font-weight:normal;line-height:20px;">Draft</div>
<div class="t" style="right:1274px;top:754.7px;font-size:13.2px;color:#333;letter-spacing:0.03px;font-weight:normal;line-height:20px;">3</div>
<div class="t" style="right:1068.4px;top:754.7px;font-size:13.2px;color:#333;letter-spacing:0.03px;font-weight:normal;line-height:20px;">$6,398.13</div>
<div class="t" style="left:391.2px;top:787.6px;font-size:13.5px;color:#333;letter-spacing:0.15px;font-weight:normal;line-height:20px;">Denied</div>
<div class="t" style="right:1274px;top:787.6px;font-size:13.2px;color:#333;letter-spacing:0.03px;font-weight:normal;line-height:20px;">2</div>
<div class="t" style="right:1068.4px;top:787.6px;font-size:13.2px;color:#333;letter-spacing:0.03px;font-weight:normal;line-height:20px;">$5,348.45</div>
<div class="t" style="left:391.2px;top:819.5px;font-size:13.5px;color:#333;letter-spacing:0.15px;font-weight:normal;line-height:20px;">Write-Off</div>
<div class="t" style="right:1274px;top:819.5px;font-size:13.2px;color:#333;letter-spacing:0.03px;font-weight:normal;line-height:20px;">2</div>
<div class="t" style="right:1068.4px;top:819.5px;font-size:13.2px;color:#333;letter-spacing:0.03px;font-weight:normal;line-height:20px;">$3,575.00</div>
<div class="card" style="left:885px;top:594px;width:506px;height:271px"><div class="hd" style="height:41px"></div><div class="ttl" style="letter-spacing:0.39px;top:10.5px">Recent Payments</div></div>
<div class="abs" style="left:898px;top:648px;width:480px;height:34.500px;background:#f8f8f8;border-bottom:1.500px solid #ececec"></div>
<div class="abs" style="left:898px;top:716px;width:480px;height:32px;background:#f9f9f9"></div>
<div class="abs" style="left:898px;top:781px;width:480px;height:32px;background:#f9f9f9"></div>
<div class="t" style="left:908.2px;top:654.8px;font-size:14px;color:#2b2b2b;letter-spacing:0.38px;font-weight:normal;line-height:20px;-webkit-text-stroke:.5px #2b2b2b;">Date</div>
<div class="t" style="right:713.06px;top:654.8px;font-size:14px;color:#2b2b2b;letter-spacing:0.44px;font-weight:normal;line-height:20px;-webkit-text-stroke:.5px #2b2b2b;">Invoice #</div>
<div class="t" style="right:550.8999999999999px;top:654.8px;font-size:14px;color:#2b2b2b;letter-spacing:0.9px;font-weight:normal;line-height:20px;-webkit-text-stroke:.5px #2b2b2b;">Amount</div>
<div class="t" style="left:908.2px;top:689.5px;font-size:13.2px;color:#333;letter-spacing:0.2px;font-weight:normal;line-height:20px;">07/07/2022</div>
<div class="t" style="right:713.5px;top:689.5px;font-size:13.2px;color:#333;letter-spacing:0.03px;font-weight:normal;line-height:20px;">2067</div>
<div class="t" style="right:551.8px;top:689.5px;font-size:13.2px;color:#333;letter-spacing:0.03px;font-weight:normal;line-height:20px;">$28,438.45</div>
<div class="t" style="left:908.2px;top:722.7px;font-size:13.2px;color:#333;letter-spacing:0.2px;font-weight:normal;line-height:20px;">08/11/2022</div>
<div class="t" style="right:713.5px;top:722.7px;font-size:13.2px;color:#333;letter-spacing:0.03px;font-weight:normal;line-height:20px;">1857</div>
<div class="t" style="right:551.8px;top:722.7px;font-size:13.2px;color:#333;letter-spacing:0.03px;font-weight:normal;line-height:20px;">$4,355.42</div>
<div class="t" style="left:908.2px;top:754.7px;font-size:13.2px;color:#333;letter-spacing:0.2px;font-weight:normal;line-height:20px;">08/12/2022</div>
<div class="t" style="right:713.5px;top:754.7px;font-size:13.2px;color:#333;letter-spacing:0.03px;font-weight:normal;line-height:20px;">2121</div>
<div class="t" style="right:551.8px;top:754.7px;font-size:13.2px;color:#333;letter-spacing:0.03px;font-weight:normal;line-height:20px;">$13,313.85</div>
<div class="t" style="left:908.2px;top:787.6px;font-size:13.2px;color:#333;letter-spacing:0.2px;font-weight:normal;line-height:20px;">08/15/2022</div>
<div class="t" style="right:713.5px;top:787.6px;font-size:13.2px;color:#333;letter-spacing:0.03px;font-weight:normal;line-height:20px;">2117</div>
<div class="t" style="right:551.8px;top:787.6px;font-size:13.2px;color:#333;letter-spacing:0.03px;font-weight:normal;line-height:20px;">$11,913.90</div>
<div class="t" style="left:908.2px;top:819.5px;font-size:13.2px;color:#333;letter-spacing:0.2px;font-weight:normal;line-height:20px;">08/11/2022</div>
<div class="t" style="right:713.5px;top:819.5px;font-size:13.2px;color:#333;letter-spacing:0.03px;font-weight:normal;line-height:20px;">2074</div>
<div class="t" style="right:551.8px;top:819.5px;font-size:13.2px;color:#333;letter-spacing:0.03px;font-weight:normal;line-height:20px;">$31,000.00</div>
<div class="card" style="left:1401px;top:594px;width:507px;height:271px"><div class="hd" style="height:41px"></div><div class="ttl" style="letter-spacing:0.37px;top:10.5px">Invoices Coming Due</div></div>
<div class="abs" style="left:1414px;top:648px;width:481px;height:34.500px;background:#f8f8f8;border-bottom:1.500px solid #ececec"></div>
<div class="abs" style="left:1414px;top:716px;width:481px;height:32px;background:#f9f9f9"></div>
<div class="abs" style="left:1414px;top:781px;width:481px;height:32px;background:#f9f9f9"></div>
<div class="t" style="left:1424.4px;top:654.8px;font-size:14px;color:#2b2b2b;letter-spacing:0.48px;font-weight:normal;line-height:20px;-webkit-text-stroke:.5px #2b2b2b;">Due</div>
<div class="t" style="right:276.76px;top:654.8px;font-size:14px;color:#2b2b2b;letter-spacing:0.44px;font-weight:normal;line-height:20px;-webkit-text-stroke:.5px #2b2b2b;">Invoice #</div>
<div class="t" style="right:155.29999999999995px;top:654.8px;font-size:14px;color:#2b2b2b;letter-spacing:0.9px;font-weight:normal;line-height:20px;-webkit-text-stroke:.5px #2b2b2b;">Amount</div>
<div class="t" style="right:34.98000000000002px;top:654.8px;font-size:14px;color:#2b2b2b;letter-spacing:0.22px;font-weight:normal;line-height:20px;-webkit-text-stroke:.5px #2b2b2b;">Balance</div>
<div class="t" style="left:1424.4px;top:689.5px;font-size:13.2px;color:#333;letter-spacing:0.2px;font-weight:normal;line-height:20px;">08/25/2022</div>
<div class="t" style="right:277.20000000000005px;top:689.5px;font-size:13.2px;color:#333;letter-spacing:0.03px;font-weight:normal;line-height:20px;">2126</div>
<div class="t" style="right:156.20000000000005px;top:689.5px;font-size:13.2px;color:#333;letter-spacing:0.03px;font-weight:normal;line-height:20px;">$500.00</div>
<div class="t" style="right:35.200000000000045px;top:689.5px;font-size:13.2px;color:#333;letter-spacing:0.03px;font-weight:normal;line-height:20px;">$500.00</div>
<div class="t" style="left:1424.4px;top:722.7px;font-size:13.2px;color:#333;letter-spacing:0.2px;font-weight:normal;line-height:20px;">08/25/2022</div>
<div class="t" style="right:277.20000000000005px;top:722.7px;font-size:13.2px;color:#333;letter-spacing:0.03px;font-weight:normal;line-height:20px;">2124</div>
<div class="t" style="right:156.20000000000005px;top:722.7px;font-size:13.2px;color:#333;letter-spacing:0.03px;font-weight:normal;line-height:20px;">$2,165.90</div>
<div class="t" style="right:35.200000000000045px;top:722.7px;font-size:13.2px;color:#333;letter-spacing:0.03px;font-weight:normal;line-height:20px;">$2,165.90</div>
<div class="t" style="left:1424.4px;top:754.7px;font-size:13.2px;color:#333;letter-spacing:0.2px;font-weight:normal;line-height:20px;">08/25/2022</div>
<div class="t" style="right:277.20000000000005px;top:754.7px;font-size:13.2px;color:#333;letter-spacing:0.03px;font-weight:normal;line-height:20px;">2123</div>
<div class="t" style="right:156.20000000000005px;top:754.7px;font-size:13.2px;color:#333;letter-spacing:0.03px;font-weight:normal;line-height:20px;">$13,340.61</div>
<div class="t" style="right:35.200000000000045px;top:754.7px;font-size:13.2px;color:#333;letter-spacing:0.03px;font-weight:normal;line-height:20px;">$13,340.61</div>
<div class="t" style="left:1424.4px;top:787.6px;font-size:13.2px;color:#333;letter-spacing:0.2px;font-weight:normal;line-height:20px;">08/25/2022</div>
<div class="t" style="right:277.20000000000005px;top:787.6px;font-size:13.2px;color:#333;letter-spacing:0.03px;font-weight:normal;line-height:20px;">2125</div>
<div class="t" style="right:156.20000000000005px;top:787.6px;font-size:13.2px;color:#333;letter-spacing:0.03px;font-weight:normal;line-height:20px;">$8,634.53</div>
<div class="t" style="right:35.200000000000045px;top:787.6px;font-size:13.2px;color:#333;letter-spacing:0.03px;font-weight:normal;line-height:20px;">$8,634.53</div>
<div class="t" style="left:1424.4px;top:819.5px;font-size:13.2px;color:#333;letter-spacing:0.2px;font-weight:normal;line-height:20px;">08/31/2022</div>
<div class="t" style="right:277.20000000000005px;top:819.5px;font-size:13.2px;color:#333;letter-spacing:0.03px;font-weight:normal;line-height:20px;">2127</div>
<div class="t" style="right:156.20000000000005px;top:819.5px;font-size:13.2px;color:#333;letter-spacing:0.03px;font-weight:normal;line-height:20px;">$417.50</div>
<div class="t" style="right:35.200000000000045px;top:819.5px;font-size:13.2px;color:#333;letter-spacing:0.03px;font-weight:normal;line-height:20px;">$417.50</div>
</div>
<!-- MAIN_END -->

<!-- FOOT_START -->
<!-- ================= FOOTER ================= -->
<div id="fsh"></div>
<div id="foot">
<div class="abs" style="left:0;top:0;width:1px;height:29px;background:#cfcfd3"></div>
<div class="abs" style="left:349px;top:0;width:1px;height:29px;background:#c9c9cf"></div>
<svg class="abs" style="left:27px;top:7.500px" width="18" height="15" viewBox="0 0 18 15"><path d="M4.800 1.100 H12.200 Q15.600 1.100 15.600 4.500 V13.800 H4.800 Q1.400 13.800 1.400 10.400 V4.500 Q1.400 1.100 4.800 1.100 Z" fill="none" stroke="#1f2d54" stroke-width="2.200" stroke-linejoin="round"/><rect x="5" y="6.400" width="2.200" height="2.200" rx=".6" fill="#1f2d54"/><rect x="9.800" y="6.400" width="2.200" height="2.200" rx=".6" fill="#1f2d54"/></svg>
<svg class="abs" style="left:97px;top:6px" width="17" height="18" viewBox="0 0 17 18" fill="none" stroke="#8a8d99" stroke-width="1.250" stroke-linecap="round" stroke-linejoin="round"><path d="M4.200 5.800 C4.200 2.800 6 1 8.500 1 C11 1 12.800 2.800 12.800 5.800"/><path d="M3 5.900 H14"/><path d="M8.500 1 V4"/><path d="M5 6.200 C5 9.200 6.300 11 8.500 11 C10.700 11 12 9.200 12 6.200"/><path d="M1.200 17 C1.400 14.600 3 13.400 5.500 13.400 H11.500 C14 13.400 15.600 14.600 15.800 17 Z"/></svg>
<svg class="abs" style="left:167px;top:6.500px" width="17" height="17" viewBox="0 0 17 17" fill="none" stroke="#8a8d99" stroke-width="1.300" stroke-linecap="round"><circle cx="6.400" cy="4.600" r="3.600"/><path d="M.8 16 C.8 12.400 3 10.400 6.400 10.400 C9.800 10.400 12 12.400 12 16"/><path d="M11.200 1.300 C13 1.800 14 3.100 14 4.700 C14 6.300 13 7.600 11.500 8"/><path d="M13.200 10.800 C15.200 11.600 16.200 13.400 16.200 16"/></svg>
<svg class="abs" style="left:236px;top:7.500px" width="18" height="15" viewBox="0 0 18 15" fill="none" stroke="#8a8d99" stroke-width="1.300"><path d="M2.800 13.600 V1 H9.800 V13.600"/><path d="M9.800 6 H14.600 V13.600"/><path d="M.3 13.900 H17.500" stroke-width="1.500"/><path d="M5 4 H7.600 M5 6.800 H7.600 M5 9.600 H7.600 M12.200 8.600 V11.500"/></svg>
<svg class="abs" style="left:303.500px;top:6px" width="22" height="18" viewBox="0 0 22 18" fill="none" stroke="#8a8d99" stroke-width="1.300" stroke-linecap="round" stroke-linejoin="round"><path d="M1 8.800 L11 1 L21 8.800"/><path d="M3.800 7 V17.200 H18.200 V7"/><circle cx="11" cy="8.400" r="1.800"/><path d="M7.600 14.600 C7.600 12.400 9 11.400 11 11.400 C13 11.400 14.400 12.400 14.400 14.600"/></svg>
<div class="abs" style="left:1554px;top:0;width:1px;height:29px;background:#d9d9de"></div>
<div class="abs" style="left:1774px;top:0;width:1px;height:29px;background:#d9d9de"></div>
<svg class="abs" style="left:1562px;top:8px" width="16" height="16" viewBox="0 0 16 16" fill="none" stroke="#222" stroke-width="1.500" stroke-linecap="round"><circle cx="6.600" cy="6.600" r="5.300"/><path d="M10.600 10.600 L14.800 14.800"/></svg>
<div class="t" style="left:1586px;top:5.500px;font-size:14.6px;color:#bbb;letter-spacing:-.2px;line-height:20px">Search here...</div>
<svg class="abs" style="left:1787px;top:5px" width="17" height="19" viewBox="0 0 17 19"><rect x="3.600" y=".3" width="2" height="4" rx=".8" fill="#6d7282"/><rect x="11.400" y=".3" width="2" height="4" rx=".8" fill="#6d7282"/><path d="M2.200 2.400 H14.800 Q16.400 2.400 16.400 4 V6.600 H.6 V4 Q.6 2.400 2.200 2.400Z" fill="#6d7282"/><rect x="1.200" y="6" width="14.600" height="11.800" rx="1.200" fill="none" stroke="#6d7282" stroke-width="1.300"/><path d="M1.200 10 H15.800 M1.200 13.800 H15.800 M6 6.400 V17.600 M11 6.400 V17.600" stroke="#6d7282" stroke-width="1.200"/></svg>
<svg class="abs" style="left:1821.500px;top:5px" width="17" height="19" viewBox="0 0 17 19"><rect x="3.600" y=".3" width="2" height="4" rx=".8" fill="#6d7282"/><rect x="11.400" y=".3" width="2" height="4" rx=".8" fill="#6d7282"/><path d="M2.200 2.400 H14.800 Q16.400 2.400 16.400 4 V6.600 H.6 V4 Q.6 2.400 2.200 2.400Z" fill="#6d7282"/><rect x="1.300" y="6" width="14.400" height="11.700" rx="1.400" fill="none" stroke="#6d7282" stroke-width="1.500"/><path d="M8.500 8.600 V15.200 M5.200 11.900 H11.800" stroke="#6d7282" stroke-width="1.500"/></svg>
<svg class="abs" style="left:1857px;top:5px" width="17" height="19" viewBox="0 0 17 19" fill="none" stroke="#6d7282" stroke-width="1.400" stroke-linejoin="round" stroke-linecap="round"><path d="M8.500 1.600 C5.200 1.600 3.600 4 3.600 7 C3.600 10.600 2.600 12 1.200 13.600 H15.800 C14.400 12 13.400 10.600 13.400 7 C13.400 4 11.800 1.600 8.500 1.600 Z"/><path d="M8.500 .5 V1.600"/><path d="M6.800 16.200 C7.200 17.200 7.800 17.600 8.500 17.600 C9.200 17.600 9.800 17.200 10.200 16.200 Z" fill="#6d7282"/></svg>
<svg class="abs" style="left:1890px;top:5px" width="20" height="19" viewBox="0 0 20 19" fill="none" stroke="#6d7282" stroke-width="1.500" stroke-linecap="round" stroke-linejoin="round"><path d="M3.400 5.400 C4.800 2.600 7.400 1 10.400 1 C15 1 18.600 4.700 18.600 9.300 C18.600 13.900 15 17.600 10.400 17.600 C7.600 17.600 5.200 16.200 3.800 14"/><path d="M1 2.200 L3 6.400 L7.400 5.200" fill="#6d7282" stroke-width="1"/><path d="M10.400 5 V9.600 L13.400 12"/></svg>
</div>
<!-- FOOT_END -->

</body>
</html>
